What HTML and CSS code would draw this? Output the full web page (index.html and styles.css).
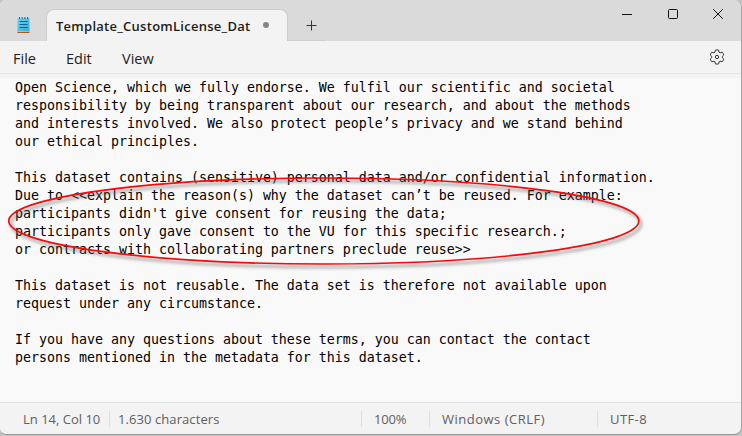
FILE: index.html
```
<!DOCTYPE html>
<html lang="en">
<head>
<meta charset="utf-8">
<title>Notepad</title>
<link rel="stylesheet" href="styles.css">
</head>
<body>
<div class="window">
  <header class="titlebar">
    <div class="corner">
      <svg class="app-icon" width="13" height="17" viewBox="0 0 13 17">
        <defs><linearGradient id="paper" x2="1" y2="1"><stop stop-color="#6bd4f3"/><stop offset="1" stop-color="#3aabd3"/></linearGradient></defs>
        <path d="M.5 14h12v2H.5z" fill="#a85a24"/>
        <path d="M.5 13h12v1.7H.5z" fill="#e8e5e0"/>
        <path d="M.5 1.3h12v12.9H.5z" fill="url(#paper)"/>
        <path d="M2.5 0v2M5.2 0v2M7.9 0v2M10.6 0v2" stroke="#14648a"/>
        <path d="M2.5 4.5h8M2.5 7.5h8M2.5 10.5h8" stroke="#08658a"/>
      </svg>
    </div>
    <div class="tab"><span class="tab-name">Template_CustomLicense_Dat</span><i class="dirty"></i></div>
    <div class="new-tab">
      <svg width="11" height="11" viewBox="0 0 11 11"><path d="M5.5.5v10M.5 5.5h10" stroke="#333"/></svg>
    </div>
    <div class="controls">
      <svg width="10" height="10" viewBox="0 0 10 10"><path d="M0 5.5h10" stroke="#111"/></svg>
      <svg width="10" height="10" viewBox="0 0 10 10"><rect x=".5" y=".5" width="9" height="9" rx="1" fill="none" stroke="#111"/></svg>
      <svg width="10" height="10" viewBox="0 0 10 10"><path d="M.2.2l9.6 9.6M9.8.2L.2 9.8" stroke="#111"/></svg>
    </div>
  </header>
  <nav class="menubar">
    <span class="file">File</span><span class="edit">Edit</span><span class="view">View</span>
    <svg class="gear" width="16" height="16" viewBox="0 0 16 16" fill="none" stroke="#333" stroke-linejoin="round"><path d="M6.4 1.1Q8 .7 9.6 1.1L10 3.1 11.2 3.8 13.2 3.2Q14.3 4.4 14.8 5.9L13.3 7.3V8.7L14.8 10.1Q14.3 11.6 13.2 12.8L11.2 12.2 10 12.9 9.6 14.9Q8 15.3 6.4 14.9L6 12.9 4.8 12.2 2.8 12.8Q1.7 11.6 1.2 10.1L2.7 8.7V7.3L1.2 5.9Q1.7 4.4 2.8 3.2L4.8 3.8 6 3.1Z"/><circle cx="8" cy="8" r="1.7"/></svg>
  </nav>
  <main class="editor">
<pre class="text">Open Science, which we fully endorse. We fulfil our scientific and societal
responsibility by being transparent about our research, and about the methods
and interests involved. We also protect people’s privacy and we stand behind
our ethical principles.

This dataset contains (sensitive) personal data and/or confidential information.
Due to &lt;&lt;explain the reason(s) why the dataset can’t be reused. For example:
participants didn't give consent for reusing the data;
participants only gave consent to the VU for this specific research.;
or contracts with collaborating partners preclude reuse&gt;&gt;

This dataset is not reusable. The data set is therefore not available upon
request under any circumstance.

If you have any questions about these terms, you can contact the contact
persons mentioned in the metadata for this dataset.</pre>
    <svg class="highlight" width="650" height="104" viewBox="0 0 650 104" fill="none">
      <defs><filter id="soft" x="-5%" y="-20%" width="110%" height="140%"><feGaussianBlur stdDeviation="1.4"/></filter></defs>
      <ellipse cx="326" cy="54" rx="315" ry="43" stroke="#666" stroke-opacity=".45" stroke-width="3" filter="url(#soft)"/>
      <ellipse cx="323.8" cy="51" rx="315" ry="43" stroke="#f60b0b" stroke-width="1.7"/>
    </svg>
  </main>
  <footer class="status">
    <span class="position">Ln 14, Col 10</span>
    <span class="count">1.630 characters</span>
    <span class="zoom">100%</span>
    <span class="eol">Windows (CRLF)</span>
    <span class="encoding">UTF-8</span>
  </footer>
</div>
</body>
</html>
```
FILE: styles.css
```
* { box-sizing: border-box; }
body {
  margin: 0;
  height: 436px;
  overflow: hidden;
  background: #c4c4c4;
  font-family: "Open Sans", "Noto Sans", sans-serif;
}
svg { display: block; }
.window {
  width: 742px;
  height: 435px;
  display: flex;
  flex-direction: column;
  overflow: hidden;
  background: #f3f3f3;
  border-right: 1px solid #a5a5a5;
  border-bottom: 1px solid #999;
  border-radius: 6px 8px 8px 6px;
}
.titlebar {
  height: 41px;
  flex: none;
  display: flex;
  background: #dadada;
}
.corner {
  width: 46px;
  padding: 17px 0 0 16.5px;
  background: #dadada;
}
.tab {
  width: 242px;
  height: 32px;
  margin-top: 9px;
  padding-left: 9px;
  display: flex;
  align-items: center;
  background: #f3f3f3;
  border: 1px solid #cdcdcd;
  border-bottom: 0;
  border-radius: 8px 8px 0 0;
}
.tab-name {
  width: 194px;
  font-size: 13px;
  font-weight: 600;
  letter-spacing: .27px;
  line-height: 18px;
  white-space: nowrap;
  color: #1c1c1c;
}
.dirty {
  width: 6px;
  height: 6px;
  margin: 0 0 1px 13px;
  border-radius: 50%;
  background: #858585;
}
.new-tab {
  width: 38px;
  padding: 20px 0 0 18px;
  border-bottom: 1px solid #cfcfcf;
}
.controls {
  margin: 9px 18px 0 auto;
  display: flex;
  gap: 35.5px;
}
.menubar {
  height: 33px;
  flex: none;
  display: flex;
  align-items: center;
  padding: 2px 16px 0 13px;
  border-bottom: 1px solid #e5e5e5;
  font-size: 14.5px;
  color: #222;
}
.file { width: 53px; }
.edit { width: 56px; }
.gear { margin: -2px 0 0 auto; }
.editor {
  position: relative;
  height: 328px;
  flex: none;
  padding: 1px 0 0 15px;
  background: #f9f9f9;
  border-top: 4px solid #f3f3f3;
}
.text {
  margin: 0;
  font: 13.29px/18px "DejaVu Sans Mono", monospace;
  color: #000;
}
.highlight {
  position: absolute;
  left: 0;
  top: 92px;
}
.status {
  flex: 1;
  display: flex;
  align-items: center;
  border-top: 1px solid #e2e2e2;
  font-size: 13px;
  color: #606060;
  white-space: nowrap;
}
.status span { height: 16px; line-height: 16px; }
.status span + span { border-left: 1px solid #dedede; }
.position { width: 109px; padding-left: 23px; }
.count { width: 252px; padding-left: 8px; letter-spacing: .08px; }
.zoom { width: 68px; padding-left: 12px; letter-spacing: -.2px; }
.eol { width: 168px; padding-left: 12px; letter-spacing: .5px; }
.encoding { padding-left: 12px; letter-spacing: .4px; }
```
